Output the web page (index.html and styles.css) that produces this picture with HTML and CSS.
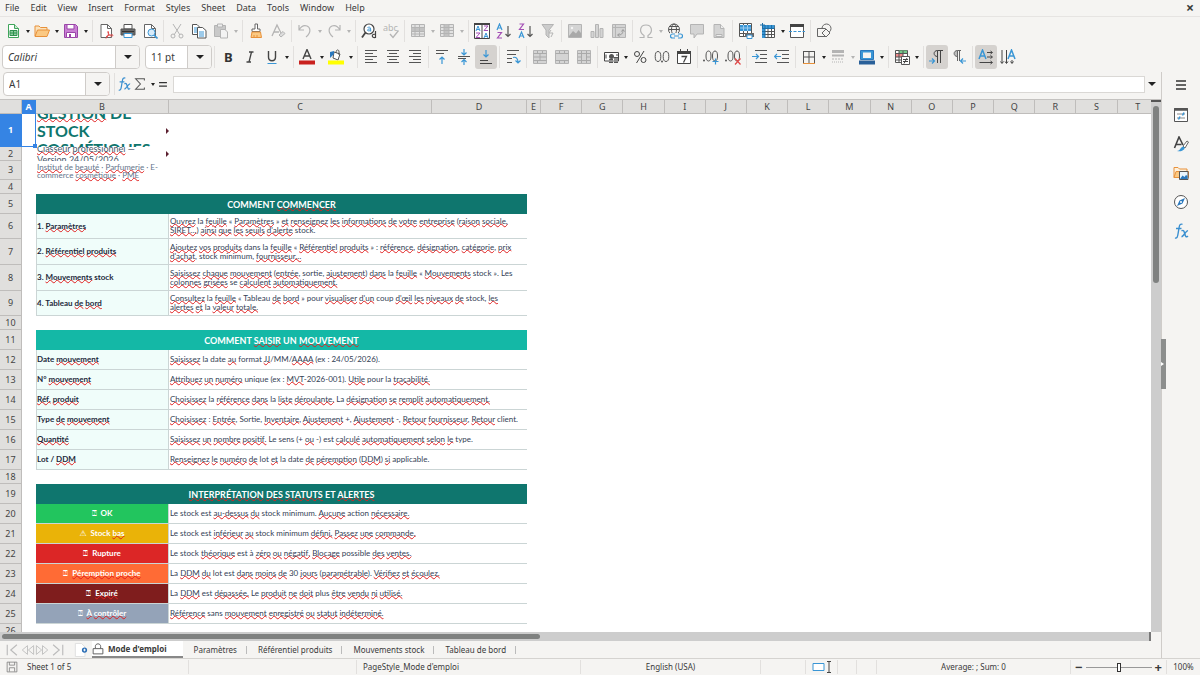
FILE: index.html
```html
<!DOCTYPE html>
<html lang="fr">
<head>
<meta charset="utf-8">
<title>Mode d'emploi</title>
<link rel="stylesheet" href="styles.css">
</head>
<body>
<svg class="defs" aria-hidden="true">
  <symbol id="new" viewBox="0 0 16 16"><path d="M3.500 1.500h6l4 4v9h-10z" fill="#fff" stroke="#3fa55b"/><path d="M9.500 1.500v4h4" fill="#c9ead0" stroke="#3fa55b"/><path d="M5 7.500h7v5H5z" fill="#8fcf9f" stroke="#2f9150"/><path d="M5 10h7M8.500 7.500v5" stroke="#2f9150"/></symbol>
  <symbol id="open" viewBox="0 0 16 16"><path d="M1 13V3h4l1.500 1.500H13V7" fill="#fbe3bd" stroke="#e8913a"/><path d="M1 13.500 3.500 7H15.500L13 13.500z" fill="#fbc983" stroke="#e8913a"/></symbol>
  <symbol id="save" viewBox="0 0 16 16"><path d="M1.500 1.500h11l2 2v11h-13z" fill="#c97fd4" stroke="#9a46a8"/><path d="M4 1.500h7V6H4zM3.500 9.500h9v5h-9z" fill="#fff" stroke="#9a46a8"/><path d="M6 11h2v3H6z" fill="#9a46a8"/></symbol>
  <symbol id="pdf" viewBox="0 0 16 16"><path d="M3 1.500h6.500l4 4v9H3z" fill="#fff" stroke="#666"/><path d="M9.500 1.500v4h4" fill="none" stroke="#666"/><path d="M8 15.500c2-2 3-5 2.500-6.500s-1.500 0 .5 2.500 4 1.500 4 .700-4-.500-7 1.500" fill="none" stroke="#e04848"/></symbol>
  <symbol id="print" viewBox="0 0 16 16"><path d="M4 1.500h8V6H4z" fill="#fff" stroke="#555"/><path d="M1 6h14v6H1z" fill="#686868" stroke="#555"/><path d="M2 8.500h12" stroke="#333"/><path d="M4 10.500h8v4H4z" fill="#fff" stroke="#3a96d5"/></symbol>
  <symbol id="preview" viewBox="0 0 16 16"><path d="M2.500 1.500h7l4 4v9h-11z" fill="#fff" stroke="#666"/><path d="M9.500 1.500v4h4" fill="none" stroke="#666"/><circle cx="9.500" cy="9.500" r="3.500" fill="#d8ecfa" stroke="#3a96d5"/><path d="m12 12 3.500 3.500" stroke="#3a96d5" stroke-width="1.600"/></symbol>
  <symbol id="cut" viewBox="0 0 16 16"><path d="m4 1 7 11M12 1 5 12" fill="none" stroke="#b4b4b4"/><circle cx="4" cy="13" r="2" fill="none" stroke="#b4b4b4"/><circle cx="12" cy="13" r="2" fill="none" stroke="#b4b4b4"/></symbol>
  <symbol id="copy" viewBox="0 0 16 16"><path d="M1.500 1.500H6l3 3v7h-7.500z" fill="#fff" stroke="#555"/><path d="M3 5h4M3 7h4M3 9h4" stroke="#3a96d5"/><path d="M6.500 4.500h5l3.500 3v7.500H6.500z" fill="#fff" stroke="#555"/><path d="M8 9h5M8 11h5M8 13h5" stroke="#3a96d5"/></symbol>
  <symbol id="paste" viewBox="0 0 16 16"><path d="M1.500 2.500h11v11h-11z" fill="#c9c9c9" stroke="#b4b4b4"/><path d="M4.500 1h5v3h-5z" fill="#eee" stroke="#b4b4b4"/><path d="M7.500 6.500H12l2.500 2.500v6h-7z" fill="#f3f3f3" stroke="#b4b4b4"/></symbol>
  <symbol id="brush" viewBox="0 0 16 16"><path d="M7 1h2.500v5H12v2.500H4V6h3z" fill="#fff" stroke="#666"/><path d="M4 9h8.500l1 5.500H3z" fill="#fbc983" stroke="#e8913a"/><path d="M6 12v2.500M9 12v2.500" stroke="#e8913a"/></symbol>
  <symbol id="clear" viewBox="0 0 16 16"><path d="M2 13 7 2l4 8M4 9h5" fill="none" stroke="#b4b4b4" stroke-width="1.300"/><path d="m9 12 4-3.500 2 2-4 3.500z" fill="#ddd" stroke="#b4b4b4"/></symbol>
  <symbol id="undo" viewBox="0 0 16 16"><path d="M2 2v5h5M2 7c2-3.500 5-5 8-4s5 6-1 11" fill="none" stroke="#b4b4b4" stroke-width="1.200"/></symbol>
  <symbol id="redo" viewBox="0 0 16 16"><path d="M14 2v5H9M14 7c-2-3.500-5-5-8-4s-5 6 1 11" fill="none" stroke="#b4b4b4" stroke-width="1.200"/></symbol>
  <symbol id="find" viewBox="0 0 16 16"><circle cx="8" cy="6" r="5" fill="#fff" stroke="#444" stroke-width="1.200"/><path d="m4.500 9.500-3.500 5" stroke="#444" stroke-width="1.800"/><path d="M6.500 4.500c3-1 3.200 0 3.200 4M9.500 6c-4-.5-4 3 0 1.500" fill="none" stroke="#3a96d5"/><path d="M14.500 8v7M14.500 11.500c-4-1.500-4.500 4 0 3" fill="none" stroke="#444" stroke-width="1.200"/></symbol>
  <symbol id="spell" viewBox="0 0 16 16"><text x="0" y="8" font-size="9" fill="#b4b4b4">abc</text><path d="m7 11 3 3.500 5.500-7" fill="none" stroke="#b4b4b4" stroke-width="1.300"/></symbol>
  <symbol id="rowi" viewBox="0 0 16 16"><path d="M1.500 1.500h13v12h-13z" fill="#e2e2e2" stroke="#b4b4b4"/><path d="M1.500 4.500h13v4h-13z" fill="#c2c2c2"/><path d="M1.500 4.500h13M1.500 8.500h13M1.500 11h13M5 1v12M9.500 1v12" stroke="#b4b4b4"/></symbol>
  <symbol id="coli" viewBox="0 0 16 16"><path d="M1.500 1.500h13v12h-13z" fill="#e2e2e2" stroke="#b4b4b4"/><path d="M5 1.500h5v12H5z" fill="#c2c2c2"/><path d="M1.500 4.500h13M1.500 7.500h13M1.500 10.500h13M5 1v12M10 1v12" stroke="#b4b4b4"/></symbol>
  <symbol id="sort" viewBox="0 0 16 16"><path d="M.5.5h15v15H.5z" fill="#fff" stroke="#444"/><path d="M0 1h16" stroke="#444" stroke-width="2"/><path d="M8 1v15" stroke="#444"/><path d="m2 8 2-5 2 5M3 6.500h2M10 15l2-5 2 5M11 13.500h2" fill="none" stroke="#3a96d5"/><path d="M2 10h4l-4 4.500h4M10 3h4l-4 4.500h4" fill="none" stroke="#a44fb5"/></symbol>
  <symbol id="az" viewBox="0 0 16 16"><path d="m1 7 2.500-6L6 7M2 5h3" fill="none" stroke="#3a96d5" stroke-width="1.200"/><path d="M1.500 9.500h4l-4 5.500h4.500" fill="none" stroke="#a44fb5" stroke-width="1.200"/><path d="M12 3v10.500M9.500 11l2.500 2.500 2.500-2.500" fill="none" stroke="#555" stroke-width="1.200"/></symbol>
  <symbol id="za" viewBox="0 0 16 16"><path d="m1 15 2.500-6L6 15M2 13h3" fill="none" stroke="#3a96d5" stroke-width="1.200"/><path d="M1.500 1h4l-4 5.500h4.500" fill="none" stroke="#a44fb5" stroke-width="1.200"/><path d="M12 3v10.500M9.500 11l2.500 2.500 2.500-2.500" fill="none" stroke="#555" stroke-width="1.200"/></symbol>
  <symbol id="filter" viewBox="0 0 16 16"><path d="M2 1.500h11.500L9 7v8l-3-3V7z" fill="#ccc" stroke="#b4b4b4"/><path d="m11 7-2 3h4l-2 4" fill="none" stroke="#b4b4b4"/></symbol>
  <symbol id="image" viewBox="0 0 16 16"><path d="M1.500 1.500h13v13h-13z" fill="#d4d4d4" stroke="#b4b4b4"/><path d="m2 13 4-5 3 2.500L11.500 7 14 10v4H2z" fill="#a9a9a9"/><circle cx="5" cy="5" r="1.200" fill="#f4f4f4"/></symbol>
  <symbol id="chart" viewBox="0 0 16 16"><path d="M2 8.500h3v6H2zM6.500 1.500h3v13h-3zM11 5.500h3v9h-3z" fill="#d4d4d4" stroke="#b4b4b4"/></symbol>
  <symbol id="pivot" viewBox="0 0 16 16"><path d="M1.500 1.500h13v13h-13z" fill="#d4d4d4" stroke="#b4b4b4"/><path d="M4.500 2v12M2 4.500h12" stroke="#b4b4b4"/><path d="M12 7c0 4-2 5-5 5M10.500 8.500 12 6.500l1.500 2M8.500 10.500 6.500 12l2 1.500" fill="none" stroke="#999"/></symbol>
  <symbol id="omega" viewBox="0 0 16 16"><path d="M1.500 14.500H6v-2C.5 9 2 2 8 2s7.500 7 2 10.500v2h4.500" fill="none" stroke="#b4b4b4" stroke-width="1.200"/></symbol>
  <symbol id="link" viewBox="0 0 16 16"><circle cx="7" cy="6.500" r="5.500" fill="none" stroke="#555"/><ellipse cx="7" cy="6.500" rx="2.500" ry="5.500" fill="none" stroke="#555"/><path d="M1.500 6.500h11M2.500 3.500h9" stroke="#555"/><path d="M3 10h12v6H3z" fill="#f5f4f2"/><path d="M8 11H5.500a2 2 0 0 0 0 4H8M11 11h2.500a2 2 0 0 1 0 4H11M7 13h5" fill="none" stroke="#3a96d5" stroke-width="1.200"/></symbol>
  <symbol id="comment" viewBox="0 0 16 16"><path d="M1.500 1.500h13v9.500H8l-3 4v-4H1.500z" fill="#d4d4d4" stroke="#b4b4b4"/></symbol>
  <symbol id="hdr" viewBox="0 0 16 16"><path d="M3 1.500h6.500l3.500 4v9H3z" fill="#d4d4d4" stroke="#b4b4b4"/><path d="M9.500 1.500v4H13M5 11.500h6v2H5z" fill="#eee" stroke="#b4b4b4"/></symbol>
  <symbol id="prange" viewBox="0 0 16 16"><path d="M1.500.5h12v13h-12z" fill="#fff" stroke="#555"/><path d="M5.500 1v12M9.500 1v12M2 10.500h12" stroke="#555"/><path d="M2 2h11v6H2z" fill="#3a96d5"/><path d="M2 5h11M5.500 2v6M9.500 2v6" stroke="#9accf0"/><path d="M7 10h9v4H7z" fill="#686868"/><path d="M9 12h5v3.500H9z" fill="#fff" stroke="#3a96d5"/></symbol>
  <symbol id="freeze" viewBox="0 0 16 16"><path d="M4.500 2.500h10v12h-10z" fill="#fff" stroke="#555"/><path d="M4.500 8.500h10M4.500 11.500h10M8 4v10M11.500 4v10" stroke="#555"/><path d="M2 2h12.500v3.500H2zM2 2.500h3V15H2z" fill="#3a96d5"/><path d="M2 5.500h12M2 8.500h3M2 11.500h3M8 2v3M11.500 2v3M5 2v13" stroke="#1d6ea8"/><path d="M0 2h5M2.500 0v5" stroke="#1d6ea8"/></symbol>
  <symbol id="split" viewBox="0 0 16 16"><path d="M1.500 2v12.500h13V2" fill="#fff" stroke="#555"/><path d="M1 2.500h14" stroke="#444" stroke-width="3"/><path d="M0 8.500h16" stroke="#3a96d5" stroke-dasharray="3 1.500"/></symbol>
  <symbol id="shapes" viewBox="0 0 16 16"><circle cx="10.500" cy="5.500" r="4.500" fill="#f5f4f2" stroke="#666"/><path d="M1.500 5.500h8v8h-8z" fill="#f5f4f2" stroke="#666"/><path d="m10 6 4 4-4 4-4-4z" fill="#f5f4f2" stroke="#666"/></symbol>
  <symbol id="bold" viewBox="0 0 16 16"><text x="4" y="13" font-size="13" font-weight="700" fill="#333">B</text></symbol>
  <symbol id="ital" viewBox="0 0 16 16"><path d="M7 3h4.500M4.500 13H9M9.500 3 7 13" stroke="#444" stroke-width="1.300"/></symbol>
  <symbol id="under" viewBox="0 0 16 16"><path d="M4.500 2v6c0 5 7 5 7 0V2" fill="none" stroke="#444" stroke-width="1.400"/><path d="M3.500 14.500h9" stroke="#3a96d5"/></symbol>
  <symbol id="fcol" viewBox="0 0 16 16"><path d="M4 10 8 .500 12 10M5.500 7h5" fill="none" stroke="#444" stroke-width="1.400"/><path d="M0 11.500h16v4H0z" fill="#c9211e"/></symbol>
  <symbol id="hcol" viewBox="0 0 16 16"><path d="m6 3 6 2-2 6-5-2z" fill="#fff" stroke="#555"/><path d="M8 4c0-4 3-4 3-1v3" fill="none" stroke="#555"/><path d="M2 9V3l4-1v3z" fill="#2a78bd"/><path d="M0 11.500h16v4H0z" fill="#ff0"/></symbol>
  <symbol id="al" viewBox="0 0 16 16"><path d="M2 1.500h12M2 4.500h8M2 7.500h12M2 10.500h8M2 13.500h12" stroke="#555"/></symbol>
  <symbol id="ac" viewBox="0 0 16 16"><path d="M2 1.500h12M4 4.500h8M2 7.500h12M4 10.500h8M2 13.500h12" stroke="#555"/></symbol>
  <symbol id="ar" viewBox="0 0 16 16"><path d="M2 1.500h12M6 4.500h8M2 7.500h12M6 10.500h8M2 13.500h12" stroke="#555"/></symbol>
  <symbol id="vt" viewBox="0 0 16 16"><path d="M2 1.500h12M2 4.500h8" stroke="#555"/><path d="M8 15V8M5.500 10.500 8 8l2.500 2.500" fill="none" stroke="#3a96d5" stroke-width="1.200"/></symbol>
  <symbol id="vm" viewBox="0 0 16 16"><path d="M2 7.500h12M2 9.500h8" stroke="#555"/><path d="M8 0v5.500M5.500 3.500 8 6l2.500-2.500M8 16v-5M5.500 13 8 10.500l2.500 2.500" fill="none" stroke="#3a96d5" stroke-width="1.200"/></symbol>
  <symbol id="vb" viewBox="0 0 16 16"><path d="M2 11.500h8M2 14.500h12" stroke="#444"/><path d="M8 1v7M5.500 5.500 8 8l2.500-2.500" fill="none" stroke="#3a96d5" stroke-width="1.200"/></symbol>
  <symbol id="wrap" viewBox="0 0 16 16"><path d="M2 1.500h12M2 5.500h9M2 9.500h5M2 13.500h5" stroke="#555"/><path d="M8 8.500c3-1 5 1 5 5M10.500 11.500 13 14l2.500-2.500" fill="none" stroke="#3a96d5" stroke-width="1.200"/></symbol>
  <symbol id="m1" viewBox="0 0 16 16"><path d="M1.500 1.500h13v13h-13z" fill="#d4d4d4" stroke="#b4b4b4"/><path d="M1.500 4.500h13M1.500 8h13M1.500 11.500h13M5.500 2v3M10.500 2v3M5.500 11v3M8 5v6" stroke="#aaa"/></symbol>
  <symbol id="m2" viewBox="0 0 16 16"><path d="M1.500 1.500h13v13h-13z" fill="#d4d4d4" stroke="#b4b4b4"/><path d="M1.500 4.500h13M1.500 11.500h13M5.500 2v3M10.500 2v3M5.500 11v3M10.500 11v3" stroke="#aaa"/></symbol>
  <symbol id="m3" viewBox="0 0 16 16"><path d="M1.500 1.500h13v13h-13z" fill="#d4d4d4" stroke="#b4b4b4"/><path d="M1.500 4.500h13M1.500 11.500h13M5.500 2v12M10.500 2v12M2 8h4M10 8h4" stroke="#aaa"/></symbol>
  <symbol id="cur" viewBox="0 0 16 16"><path d="M1.500 3.500h14V12H1.500z" fill="#fff" stroke="#444"/><circle cx="8.500" cy="7.500" r="2.500" fill="#555"/><path d="M3 5.500v4M14 5v2" stroke="#444"/><path d="M6 10h4v4H6zM11 8h4v6h-4z" fill="#555"/><path d="M6 12h9M11 10h4" stroke="#ccc"/></symbol>
  <symbol id="pct" viewBox="0 0 16 16"><circle cx="5" cy="5" r="2.500" fill="none" stroke="#444"/><circle cx="11.500" cy="11" r="2.500" fill="none" stroke="#444"/><path d="M12 2 4.500 14" stroke="#444"/></symbol>
  <symbol id="num" viewBox="0 0 16 16"><ellipse cx="4" cy="7.500" rx="2.800" ry="5" fill="none" stroke="#555"/><ellipse cx="12" cy="7.500" rx="2.800" ry="5" fill="none" stroke="#555"/><circle cx="8" cy="12.500" r="1" fill="#555"/></symbol>
  <symbol id="date" viewBox="0 0 16 16"><path d="M1.500 3h13v11.500h-13z" fill="#fff" stroke="#444"/><path d="M1 3.500h14" stroke="#444" stroke-width="3"/><path d="M4.500 0v3M11.500 0v3" stroke="#444"/><path d="M5.500 7.500h5l-3 6" fill="none" stroke="#444" stroke-width="1.300"/></symbol>
  <symbol id="dadd" viewBox="0 0 16 16"><circle cx="1" cy="11.500" r="1" fill="#555"/><ellipse cx="5.500" cy="7" rx="2.500" ry="5" fill="none" stroke="#555"/><ellipse cx="12" cy="7" rx="2.500" ry="5" fill="none" stroke="#555"/><path d="M9.500 12.500h6M12.500 9.500v6" stroke="#3a96d5" stroke-width="1.200"/></symbol>
  <symbol id="ddel" viewBox="0 0 16 16"><circle cx="1" cy="11.500" r="1" fill="#555"/><ellipse cx="5.500" cy="7" rx="2.500" ry="5" fill="none" stroke="#555"/><ellipse cx="12" cy="7" rx="2.500" ry="5" fill="none" stroke="#555"/><path d="m10 9.500 5.500 6m0-6-5.500 6" stroke="#e04848" stroke-width="1.200"/></symbol>
  <symbol id="ind" viewBox="0 0 16 16"><path d="M3 1.500h12M8 5.500h7M8 9.500h7M3 13.500h12" stroke="#555"/><path d="M0 7.500h6M4 5l2.500 2.500L4 10" fill="none" stroke="#3a96d5" stroke-width="1.200"/></symbol>
  <symbol id="outd" viewBox="0 0 16 16"><path d="M3 1.500h12M8 5.500h7M8 9.500h7M3 13.500h12" stroke="#555"/><path d="M7 7.500H1M3 5 .5 7.500 3 10" fill="none" stroke="#3a96d5" stroke-width="1.200"/></symbol>
  <symbol id="bord" viewBox="0 0 16 16"><path d="M2.500 2v12M13.500 2v12M2 2.500h12M8 2v12M2 8h12" stroke="#555"/><path d="M2 14.500h12" stroke="#e8913a"/></symbol>
  <symbol id="bsty" viewBox="0 0 16 16"><path d="M2 2.500h12" stroke="#b4b4b4" stroke-width="3"/><path d="M2 6.500h12" stroke="#b4b4b4" stroke-width="2"/><path d="M2 10h12" stroke="#b4b4b4" stroke-dasharray="2 1"/><path d="M2 13h12" stroke="#b4b4b4" stroke-dasharray="1 1"/></symbol>
  <symbol id="bcol" viewBox="0 0 16 16"><path d="M1.500 1.500h13v9h-13z" fill="#3a96d5" stroke="#2a78bd"/><path d="M4 3.500h8V9H4z" fill="#f5f4f2"/><path d="M0 11.500h16v4H0z" fill="#2a6099"/></symbol>
  <symbol id="cond" viewBox="0 0 16 16"><path d="M1.500 1.500h12v12h-12z" fill="#fff" stroke="#555"/><path d="M5 1.500h8v3H5z" fill="#74c98a"/><path d="M2 5h7v3H2z" fill="#f08a8a"/><path d="M2 4.500h11M2 8h11M2 11h5M5 2v12M9 2v6" stroke="#555"/><path d="M7.500 7.500h8v8h-8z" fill="#fff" stroke="#555"/><path d="M9 10.500h5M9 12.500h5M13 9l-3 5.500" stroke="#444"/></symbol>
  <symbol id="ltr" viewBox="0 0 16 16"><path d="M8.500 7.500C4 7.500 4 1.500 8.500 1.500H14M8.500 1.500V14M11.500 1.500V14" fill="none" stroke="#444"/><path d="M0 12h5.500M3 9.500 5.500 12 3 14.500" fill="none" stroke="#3a96d5" stroke-width="1.200"/></symbol>
  <symbol id="rtl" viewBox="0 0 16 16"><path d="M6.500 7.500C2 7.500 2 1.500 6.500 1.500z" fill="#bbb"/><path d="M6.500 7.500C2 7.500 2 1.500 6.500 1.500H10M6.500 1.500V12M8.500 1.500V12" fill="none" stroke="#666"/><path d="M15 12H9.500M12 9.500 9.500 12l2.500 2.500" fill="none" stroke="#3a96d5" stroke-width="1.200"/></symbol>
  <symbol id="hor" viewBox="0 0 16 16"><path d="M1 10 4.500 1 8 10M2.500 7h4" fill="none" stroke="#3a96d5" stroke-width="1.500"/><path d="M9 3.500h5M9 8h5M1.500 13.500H14M12.500 2l2 1.500-2 1.500M12.500 6.500l2 1.500-2 1.500M12.500 12l2 1.500-2 1.500" fill="none" stroke="#444"/></symbol>
  <symbol id="ver" viewBox="0 0 16 16"><path d="M8 10 11.500 1 15 10M9.500 7h4" fill="none" stroke="#3a96d5" stroke-width="1.500"/><path d="M2 1v13M6.500 1v13M12 11v3M.5 12.500 2 14.500l1.500-2M5 12.500l1.500 2 1.500-2M10.500 12.500l1.500 2 1.500-2" fill="none" stroke="#444"/></symbol>
  <symbol id="fx" viewBox="0 0 16 16"><path d="M2 15c2 .5 2.500-1 3-4l1.200-7C6.600 1.500 7.500.7 9.500 1.300M3 5.500h5.500" fill="none" stroke="#3a8fd0" stroke-width="1.400"/><path d="M8.500 8c2-1.500 2.500 0 3.200 2.500S13 15 15 13M15 7.800c-2-.5-4 5.500-6.500 6" fill="none" stroke="#3a8fd0" stroke-width="1.400"/></symbol>
  <symbol id="sum" viewBox="0 0 16 16"><path d="M13 4V2H3l5.500 6L3 14h10v-2" fill="none" stroke="#555" stroke-width="1.200"/></symbol>
  <symbol id="eq" viewBox="0 0 16 16"><path d="M3.500 6.500h9M3.500 10.500h9" stroke="#333" stroke-width="1.500"/></symbol>
  <symbol id="menu" viewBox="0 0 16 16"><path d="M3 4h10M3 8h10M3 12h10" stroke="#333" stroke-width="1.500"/></symbol>
  <symbol id="props" viewBox="0 0 16 16"><path d="M1.500 1.500h13v13h-13z" fill="#fff" stroke="#555"/><path d="M1 2.500h14" stroke="#555" stroke-width="2.500"/><path d="M4 7h8M4 11h8" stroke="#888"/><path d="m11 5.500-1.500 3M7 9.500l-1.500 3" stroke="#3a96d5" stroke-width="1.500"/></symbol>
  <symbol id="style" viewBox="0 0 16 16"><path d="M1.500 12 6 1l4 8M3 8.500h5.500" fill="none" stroke="#444" stroke-width="1.600"/><path d="m10 10 4-5 1.500 1-3.500 6z" fill="#fff" stroke="#666"/><path d="M4 15c3 0 3-3 6-4.500 2 .5 2 2 1 3s-4 2.500-7 1.500" fill="#3a96d5"/></symbol>
  <symbol id="gallery" viewBox="0 0 16 16"><path d="M1 12.500V2.500h4L6.500 4H14v2" fill="#fdf0dc" stroke="#e8913a"/><path d="M1 12.500 3 6.500h12.500v6z" fill="#fbc983" stroke="#e8913a"/><path d="M6.500 6.500h8.500v8H6.500z" fill="#e9f5fd" stroke="#555"/><path d="m7 14 2.500-3.500 2 1.500 1.500-2 1.500 1v3z" fill="#2a78bd"/></symbol>
  <symbol id="nav" viewBox="0 0 16 16"><circle cx="8" cy="8" r="6.500" fill="#fff" stroke="#555"/><path d="M12 4 9.500 9.500 4 12l2.500-5.500z" fill="#2a78bd"/><circle cx="8" cy="8" r="1" fill="#fff"/></symbol>
  <symbol id="lock" viewBox="0 0 16 16"><path d="M1.500 7.500h13v7h-13zM4.500 7V4.500c0-4.500 7-4.500 7 0V7" fill="none" stroke="#555" stroke-width="1.200"/></symbol>
  <symbol id="addsheet" viewBox="0 0 16 16"><path d="M1.500.5h7l4 4v11h-11z" fill="#fff" stroke="#ddd"/><circle cx="12" cy="8" r="3" fill="#2a6db5"/><path d="M10.500 8h3M12 6.500v3" stroke="#fff"/></symbol>
  <symbol id="disk" viewBox="0 0 16 16"><path d="M1.500 1.500h13v13h-13zM4.500 1.500v4h7v-4M4.500 14v-5h7v5" fill="none" stroke="#777"/></symbol>
  <symbol id="first" viewBox="0 0 16 16"><path d="M2 2v12M13 2 6 8l7 6" fill="none" stroke="#bbb" stroke-width="1.300"/></symbol>
  <symbol id="prev" viewBox="0 0 16 16"><path d="M8 3 2 8l6 5zM15 3 9 8l6 5z" fill="none" stroke="#bbb"/></symbol>
  <symbol id="next" viewBox="0 0 16 16"><path d="m1 3 6 5-6 5zM8 3l6 5-6 5z" fill="none" stroke="#bbb"/></symbol>
  <symbol id="last" viewBox="0 0 16 16"><path d="M14 2v12M3 2l7 6-7 6" fill="none" stroke="#bbb" stroke-width="1.300"/></symbol>
  <symbol id="selm" viewBox="0 0 20 12"><path d="M1 2.500h11v7H1z" fill="#fff" stroke="#3a96d5"/><path d="M15 .5h4M15 11.500h4M17 .5v11" stroke="#444"/></symbol>
</svg>

<nav class="menubar">
  <button>File</button><button>Edit</button><button>View</button><button>Insert</button><button>Format</button><button>Styles</button><button>Sheet</button><button>Data</button><button>Tools</button><button>Window</button><button>Help</button>
  <button class="close" aria-label="Close">×</button>
</nav>

<div class="toolbars">
  <div class="toolbar">
    <button class="tb" aria-label="New"><svg><use href="#new"/></svg></button><button class="dd" aria-label="New options"></button>
    <button class="tb" aria-label="Open"><svg><use href="#open"/></svg></button><button class="dd" aria-label="Open options"></button>
    <button class="tb" aria-label="Save"><svg><use href="#save"/></svg></button><button class="dd" aria-label="Save options"></button>
    <i class="sep"></i>
    <button class="tb" aria-label="Export as PDF"><svg><use href="#pdf"/></svg></button>
    <button class="tb" aria-label="Print"><svg><use href="#print"/></svg></button>
    <button class="tb" aria-label="Print preview"><svg><use href="#preview"/></svg></button>
    <i class="sep"></i>
    <button class="tb" aria-label="Cut"><svg><use href="#cut"/></svg></button>
    <button class="tb" aria-label="Copy"><svg><use href="#copy"/></svg></button>
    <button class="tb" aria-label="Paste"><svg><use href="#paste"/></svg></button><button class="dd off" aria-label="Paste options"></button>
    <i class="sep"></i>
    <button class="tb" aria-label="Clone formatting"><svg><use href="#brush"/></svg></button>
    <button class="tb" aria-label="Clear formatting"><svg><use href="#clear"/></svg></button>
    <i class="sep"></i>
    <button class="tb" aria-label="Undo"><svg><use href="#undo"/></svg></button><button class="dd off" aria-label="Undo list"></button>
    <button class="tb" aria-label="Redo"><svg><use href="#redo"/></svg></button><button class="dd off" aria-label="Redo list"></button>
    <i class="sep"></i>
    <button class="tb" aria-label="Find and replace"><svg><use href="#find"/></svg></button>
    <button class="tb" aria-label="Spelling"><svg><use href="#spell"/></svg></button>
    <i class="sep"></i>
    <button class="tb" aria-label="Row"><svg><use href="#rowi"/></svg></button><button class="dd off" aria-label="Row options"></button>
    <button class="tb" aria-label="Column"><svg><use href="#coli"/></svg></button><button class="dd off" aria-label="Column options"></button>
    <i class="sep"></i>
    <button class="tb" aria-label="Sort"><svg><use href="#sort"/></svg></button>
    <button class="tb" aria-label="Sort ascending"><svg><use href="#az"/></svg></button>
    <button class="tb" aria-label="Sort descending"><svg><use href="#za"/></svg></button>
    <button class="tb" aria-label="AutoFilter"><svg><use href="#filter"/></svg></button>
    <i class="sep"></i>
    <button class="tb" aria-label="Insert image"><svg><use href="#image"/></svg></button>
    <button class="tb" aria-label="Insert chart"><svg><use href="#chart"/></svg></button>
    <button class="tb" aria-label="Pivot table"><svg><use href="#pivot"/></svg></button>
    <i class="sep"></i>
    <button class="tb" aria-label="Special character"><svg><use href="#omega"/></svg></button><button class="dd off" aria-label="More characters"></button>
    <button class="tb" aria-label="Hyperlink"><svg><use href="#link"/></svg></button>
    <button class="tb" aria-label="Comment"><svg><use href="#comment"/></svg></button>
    <button class="tb" aria-label="Headers and footers"><svg><use href="#hdr"/></svg></button>
    <i class="sep"></i>
    <button class="tb" aria-label="Print area"><svg><use href="#prange"/></svg></button>
    <button class="tb" aria-label="Freeze"><svg><use href="#freeze"/></svg></button><button class="dd" aria-label="Freeze options"></button>
    <button class="tb" aria-label="Split window"><svg><use href="#split"/></svg></button>
    <i class="sep"></i>
    <button class="tb" aria-label="Draw functions"><svg><use href="#shapes"/></svg></button>
  </div>
  <div class="toolbar format">
    <div class="combo font"><input type="text" aria-label="Font name" value="Calibri"><button aria-label="Font list"></button></div>
    <div class="combo size"><input type="text" aria-label="Font size" value="11 pt"><button aria-label="Size list"></button></div>
    <i class="sep"></i>
    <button class="tb" aria-label="Bold"><svg><use href="#bold"/></svg></button>
    <button class="tb" aria-label="Italic"><svg><use href="#ital"/></svg></button>
    <button class="tb" aria-label="Underline"><svg><use href="#under"/></svg></button><button class="dd" aria-label="Underline options"></button>
    <i class="sep"></i>
    <button class="tb" aria-label="Font colour"><svg><use href="#fcol"/></svg></button><button class="dd" aria-label="Font colours"></button>
    <button class="tb" aria-label="Background colour"><svg><use href="#hcol"/></svg></button><button class="dd" aria-label="Background colours"></button>
    <i class="sep"></i>
    <button class="tb" aria-label="Align left"><svg><use href="#al"/></svg></button>
    <button class="tb" aria-label="Align centre"><svg><use href="#ac"/></svg></button>
    <button class="tb" aria-label="Align right"><svg><use href="#ar"/></svg></button>
    <i class="sep"></i>
    <button class="tb" aria-label="Align top"><svg><use href="#vt"/></svg></button>
    <button class="tb" aria-label="Centre vertically"><svg><use href="#vm"/></svg></button>
    <button class="tb on" aria-label="Align bottom" aria-pressed="true"><svg><use href="#vb"/></svg></button>
    <i class="sep"></i>
    <button class="tb" aria-label="Wrap text"><svg><use href="#wrap"/></svg></button>
    <i class="sep"></i>
    <button class="tb" aria-label="Merge and centre"><svg><use href="#m1"/></svg></button>
    <button class="tb" aria-label="Merge cells"><svg><use href="#m2"/></svg></button>
    <button class="tb" aria-label="Unmerge cells"><svg><use href="#m3"/></svg></button>
    <i class="sep"></i>
    <button class="tb" aria-label="Currency"><svg><use href="#cur"/></svg></button><button class="dd" aria-label="Currencies"></button>
    <button class="tb" aria-label="Percent"><svg><use href="#pct"/></svg></button>
    <button class="tb" aria-label="Number"><svg><use href="#num"/></svg></button>
    <button class="tb" aria-label="Date"><svg><use href="#date"/></svg></button>
    <i class="sep"></i>
    <button class="tb" aria-label="Add decimal"><svg><use href="#dadd"/></svg></button>
    <button class="tb" aria-label="Delete decimal"><svg><use href="#ddel"/></svg></button>
    <i class="sep"></i>
    <button class="tb" aria-label="Increase indent"><svg><use href="#ind"/></svg></button>
    <button class="tb" aria-label="Decrease indent"><svg><use href="#outd"/></svg></button>
    <i class="sep"></i>
    <button class="tb" aria-label="Borders"><svg><use href="#bord"/></svg></button><button class="dd" aria-label="Border list"></button>
    <button class="tb" aria-label="Border style"><svg><use href="#bsty"/></svg></button><button class="dd off" aria-label="Border styles"></button>
    <button class="tb" aria-label="Border colour"><svg><use href="#bcol"/></svg></button><button class="dd" aria-label="Border colours"></button>
    <i class="sep"></i>
    <button class="tb" aria-label="Conditional formatting"><svg><use href="#cond"/></svg></button><button class="dd" aria-label="Conditions"></button>
    <i class="sep"></i>
    <button class="tb on" aria-label="Left to right" aria-pressed="true"><svg><use href="#ltr"/></svg></button>
    <button class="tb" aria-label="Right to left"><svg><use href="#rtl"/></svg></button>
    <i class="sep"></i>
    <button class="tb on" aria-label="Horizontal text" aria-pressed="true"><svg><use href="#hor"/></svg></button>
    <button class="tb" aria-label="Vertical text"><svg><use href="#ver"/></svg></button>
  </div>
</div>

<div class="main">
  <div class="work">
    <div class="formulabar">
      <div class="combo name"><input type="text" aria-label="Name box" value="A1"><button aria-label="Named ranges"></button></div>
      <i class="sep"></i>
      <button class="fb" aria-label="Function wizard"><svg><use href="#fx"/></svg></button>
      <button class="fb" aria-label="Sum"><svg><use href="#sum"/></svg></button><button class="dd" aria-label="Select function"></button>
      <button class="fb" aria-label="Formula"><svg><use href="#eq"/></svg></button>
      <input class="formula" type="text" aria-label="Formula input">
      <button class="dd big" aria-label="Expand formula bar"></button>
    </div>

    <div class="view">
      <div class="sheet">
        <table>
          <colgroup><col class="c-row"><col class="c-a"><col class="c-b"><col class="c-c"><col class="c-d"><col class="c-a"><col span="15"></colgroup>
          <thead>
            <tr><th></th><th class="sel">A</th><th>B</th><th>C</th><th>D</th><th>E</th><th>F</th><th>G</th><th>H</th><th>I</th><th>J</th><th>K</th><th>L</th><th>M</th><th>N</th><th>O</th><th>P</th><th>Q</th><th>R</th><th>S</th><th>T</th></tr>
          </thead>
          <tbody>
            <tr class="r-title"><th class="sel">1</th><td class="cursor"></td><td class="more"><div class="clip title"><span><u>GESTION</u> DE<br>STOCK<br><u>COSMÉTIQUES</u></span></div></td><td colspan="18"></td></tr>
            <tr class="r-thin"><th>2</th><td></td><td class="more"><div class="clip sub"><span><u>Classeur</u> <u>professionnel</u> —<br>Version 24/05/2026</span></div></td><td colspan="18"></td></tr>
            <tr class="r-note"><th>3</th><td></td><td class="note"><u>Institut</u> de <u>beauté</u> · <u>Parfumerie</u> · E-<br>commerce <u>cosmétique</u> · <u>PME</u></td><td colspan="18"></td></tr>
            <tr class="r-thin"><th>4</th><td colspan="20"></td></tr>
            <tr><th>5</th><td></td><td class="band" colspan="3">COMMENT <u>COMMENCER</u></td><td colspan="16"></td></tr>
            <tr class="r-mid"><th>6</th><td></td><td class="key">1. <u>Paramètres</u></td><td class="val" colspan="2"><u>Ouvrez</u> la <u>feuille</u> « <u>Paramètres</u> » <u>et</u> <u>renseignez</u> <u>les</u> <u>informations</u> <u>de</u> <u>votre</u> <u>entreprise</u> (<u>raison</u> <u>sociale,</u><br><u>SIRET…</u>) <u>ainsi</u> <u>que</u> <u>les</u> <u>seuils</u> <u>d'alerte</u> stock.</td><td colspan="16"></td></tr>
            <tr class="r-tall"><th>7</th><td></td><td class="key">2. <u>Référentiel</u> <u>produits</u></td><td class="val" colspan="2"><u>Ajoutez</u> <u>vos</u> <u>produits</u> dans la <u>feuille</u> « <u>Référentiel</u> <u>produits</u> » : <u>référence</u>, <u>désignation</u>, <u>catégorie</u>, <u>prix</u><br><u>d'achat</u>, stock minimum, <u>fournisseur…</u></td><td colspan="16"></td></tr>
            <tr class="r-tall"><th>8</th><td></td><td class="key">3. <u>Mouvements</u> stock</td><td class="val" colspan="2"><u>Saisissez</u> <u>chaque</u> <u>mouvement</u> (<u>entrée</u>, sortie, <u>ajustement</u>) <u>dans</u> la <u>feuille</u> « <u>Mouvements</u> stock ». Les<br><u>colonnes</u> <u>grisées</u> se <u>calculent</u> <u>automatiquement.</u></td><td colspan="16"></td></tr>
            <tr class="r-mid"><th>9</th><td></td><td class="key">4. Tableau <u>de</u> <u>bord</u></td><td class="val" colspan="2"><u>Consultez</u> la <u>feuille</u> « Tableau <u>de</u> <u>bord</u> » pour <u>visualiser</u> <u>d'un</u> coup <u>d'œil</u> <u>les</u> <u>niveaux</u> <u>de</u> stock, <u>les</u><br><u>alertes</u> <u>et</u> la <u>valeur</u> <u>totale.</u></td><td colspan="16"></td></tr>
            <tr class="r-gap"><th>10</th><td colspan="20"></td></tr>
            <tr><th>11</th><td></td><td class="band light" colspan="3">COMMENT <u>SAISIR</u> UN <u>MOUVEMENT</u></td><td colspan="16"></td></tr>
            <tr><th>12</th><td></td><td class="key">Date <u>mouvement</u></td><td class="val" colspan="2"><u>Saisissez</u> la date <u>au</u> format <u>JJ</u>/MM/<u>AAAA</u> (ex : 24/05/2026).</td><td colspan="16"></td></tr>
            <tr><th>13</th><td></td><td class="key">N° <u>mouvement</u></td><td class="val" colspan="2"><u>Attribuez</u> <u>un</u> <u>numéro</u> unique (ex : <u>MVT</u>-2026-001). <u>Utile</u> pour la <u>traçabilité.</u></td><td colspan="16"></td></tr>
            <tr><th>14</th><td></td><td class="key"><u>Réf.</u> <u>produit</u></td><td class="val" colspan="2"><u>Choisissez</u> la <u>référence</u> <u>dans</u> la <u>liste</u> <u>déroulante.</u> La <u>désignation</u> <u>se</u> <u>remplit</u> <u>automatiquement.</u></td><td colspan="16"></td></tr>
            <tr><th>15</th><td></td><td class="key">Type <u>de</u> <u>mouvement</u></td><td class="val" colspan="2"><u>Choisissez</u> : <u>Entrée</u>, Sortie, <u>Inventaire</u>, <u>Ajustement</u> +, <u>Ajustement</u> -, <u>Retour</u> <u>fournisseur</u>, <u>Retour</u> client.</td><td colspan="16"></td></tr>
            <tr><th>16</th><td></td><td class="key"><u>Quantité</u></td><td class="val" colspan="2"><u>Saisissez</u> <u>un</u> <u>nombre</u> <u>positif.</u> Le sens (+ <u>ou</u> -) est <u>calculé</u> <u>automatiquement</u> <u>selon</u> <u>le</u> type.</td><td colspan="16"></td></tr>
            <tr><th>17</th><td></td><td class="key">Lot / <u>DDM</u></td><td class="val" colspan="2"><u>Renseignez</u> <u>le</u> <u>numéro</u> <u>de</u> lot <u>et</u> la date <u>de</u> <u>péremption</u> (<u>DDM</u>) <u>si</u> applicable.</td><td colspan="16"></td></tr>
            <tr class="r-gap"><th>18</th><td colspan="20"></td></tr>
            <tr><th>19</th><td></td><td class="band" colspan="3"><u>INTERPRÉTATION</u> <u>DES</u> <u>STATUTS</u> ET <u>ALERTES</u></td><td colspan="16"></td></tr>
            <tr><th>20</th><td></td><td class="tag ok"><span class="sym">⍰</span> OK</td><td class="val" colspan="2">Le stock est <u>au-dessus</u> <u>du</u> stock minimum. <u>Aucune</u> action <u>nécessaire.</u></td><td colspan="16"></td></tr>
            <tr><th>21</th><td></td><td class="tag low"><span class="sym">⚠</span> Stock <u>bas</u></td><td class="val" colspan="2">Le stock est <u>inférieur</u> <u>au</u> stock minimum <u>défini.</u> <u>Passez</u> <u>une</u> <u>commande.</u></td><td colspan="16"></td></tr>
            <tr><th>22</th><td></td><td class="tag out"><span class="sym">⍰</span> Rupture</td><td class="val" colspan="2">Le stock <u>théorique</u> est à <u>zéro</u> <u>ou</u> <u>négatif.</u> <u>Blocage</u> possible <u>des</u> <u>ventes.</u></td><td colspan="16"></td></tr>
            <tr><th>23</th><td></td><td class="tag soon"><span class="sym">⍰</span> <u>Péremption</u> <u>proche</u></td><td class="val" colspan="2">La <u>DDM</u> <u>du</u> lot est <u>dans</u> <u>moins</u> <u>de</u> 30 <u>jours</u> (<u>paramétrable</u>). <u>Vérifiez</u> <u>et</u> <u>écoulez.</u></td><td colspan="16"></td></tr>
            <tr><th>24</th><td></td><td class="tag expired"><span class="sym">⍰</span> <u>Expiré</u></td><td class="val" colspan="2">La <u>DDM</u> est <u>dépassée.</u> Le <u>produit</u> <u>ne</u> <u>doit</u> plus <u>être</u> <u>vendu</u> <u>ni</u> <u>utilisé.</u></td><td colspan="16"></td></tr>
            <tr><th>25</th><td></td><td class="tag check"><span class="sym">⍰</span> <u>À</u> <u>contrôler</u></td><td class="val" colspan="2"><u>Référence</u> sans <u>mouvement</u> <u>enregistré</u> <u>ou</u> <u>statut</u> <u>indéterminé.</u></td><td colspan="16"></td></tr>
            <tr class="r-gap"><th>26</th><td colspan="20"></td></tr>
          </tbody>
        </table>
      </div>
      <div class="vscroll"><i></i></div>
      <div class="hscroll"><i></i></div>
    </div>

    <div class="tabs">
      <div class="tabnav"><button aria-label="First sheet"><svg><use href="#first"/></svg></button><button aria-label="Previous sheet"><svg><use href="#prev"/></svg></button><button aria-label="Next sheet"><svg><use href="#next"/></svg></button><button aria-label="Last sheet"><svg><use href="#last"/></svg></button></div>
      <button class="add" aria-label="Add sheet"><svg><use href="#addsheet"/></svg></button>
      <button class="tab active"><svg><use href="#lock"/></svg>Mode d'emploi</button>
      <button class="tab">Paramètres</button>
      <button class="tab">Référentiel produits</button>
      <button class="tab">Mouvements stock</button>
      <button class="tab">Tableau de bord</button>
    </div>
  </div>

  <aside class="sidebar">
    <button aria-label="Sidebar settings"><svg><use href="#menu"/></svg></button>
    <button aria-label="Properties"><svg><use href="#props"/></svg></button>
    <button aria-label="Styles"><svg><use href="#style"/></svg></button>
    <button aria-label="Gallery"><svg><use href="#gallery"/></svg></button>
    <button aria-label="Navigator"><svg><use href="#nav"/></svg></button>
    <button aria-label="Functions"><svg><use href="#fx"/></svg></button>
    <button class="handle" aria-label="Show sidebar"></button>
  </aside>
</div>

<footer class="status">
  <div><svg class="disk"><use href="#disk"/></svg>Sheet 1 of 5</div>
  <div></div>
  <div class="page">PageStyle_Mode d'emploi</div>
  <div class="mid">English (USA)</div>
  <div></div>
  <div class="mid"><svg class="selm"><use href="#selm"/></svg></div>
  <div></div>
  <div></div>
  <div class="mid">Average: ; Sum: 0</div>
  <div class="zoom"><button aria-label="Zoom out">−</button><input type="range" aria-label="Zoom" min="20" max="180" value="100"><button aria-label="Zoom in">+</button></div>
  <div class="mid">100%</div>
</footer>
</body>
</html>
```
FILE: styles.css
```css
* { box-sizing: border-box; }
body {
  margin: 0;
  height: 100vh;
  display: flex;
  flex-direction: column;
  overflow: hidden;
  background: #f5f4f2;
  color: #3a3a3a;
  font: 9px/12px "Noto Sans", sans-serif;
}
button, input { font: inherit; color: inherit; margin: 0; padding: 0; border: 0; background: none; }
svg { display: block; width: 16px; height: 16px; }
.defs { position: absolute; width: 0; height: 0; }

/* menu bar */
.menubar { display: flex; align-items: center; height: 17px; border-bottom: 1px solid #e6e4e2; }
.menubar button { padding: 0 6px 0 5px; }
.menubar .close { margin-left: auto; font-size: 14px; font-weight: 700; }

/* toolbars */
.toolbars { padding: 0 2px 3px; }
.toolbar { display: flex; align-items: center; height: 28px; }
.toolbar.format { height: 24px; }
.tb { width: 22px; height: 24px; display: grid; place-items: center; border-radius: 3px; flex: none; }
.tb.on { background: #d5d2cf; }
.dd { width: 7px; height: 16px; display: grid; place-items: center; flex: none; }
.dd::after, .combo button::after { content: ""; border: 2px solid transparent; border-top: 3px solid #222; border-bottom: 0; }
.dd.off::after { border-top-color: #b4b4b4; }
.sep { width: 5px; height: 22px; flex: none; background: linear-gradient(#e2e0de, #e2e0de) center / 1px 100% no-repeat; }
.dd + .sep { width: 6px; }
.combo { display: flex; height: 24px; background: #fff; border: 1px solid #cfccc9; border-radius: 4px; overflow: hidden; flex: none; }
.combo input { flex: 1; min-width: 0; padding-left: 5px; font-size: 10px; }
.combo button { width: 24px; display: grid; place-items: center; background: #f5f4f2; border-left: 1px solid #cfccc9; }
.combo button::after, .dd.big::after { border-width: 4px 4px 0; }
.combo.font { width: 138px; margin-right: 5px; }
.combo.font input { font-style: italic; }
.combo.size { width: 67px; }

/* body of the window */
.main { flex: 1; min-height: 0; display: flex; }
.work { flex: 1; min-width: 0; display: flex; flex-direction: column; border-right: 1px solid #cfccc9; }
.formulabar { display: flex; align-items: center; height: 28px; padding: 0 3px 3px; border-bottom: 1px solid #c4c2c0; }
.combo.name { width: 107px; margin-right: 2px; }
.fb { width: 16px; height: 16px; flex: none; }
.fb svg { width: 14px; height: 14px; }
.formula { flex: 1; min-width: 0; height: 17px; margin: 0 1px; background: #fff; border: 1px solid #dad8d5; }
.dd.big { width: 12px; }

.view { flex: 1; min-height: 0; display: grid; grid-template: minmax(0, 1fr) 9px / minmax(0, 1fr) 10px; }
.sheet { overflow: hidden; background: #fff; }
.vscroll { background: #cdcdcd; border-top: 2px solid #555; padding: 4px 2px; }
.vscroll i { display: block; height: 34%; background: #7f8180; border-radius: 3px; }
.hscroll { background: #cdcdcd; border-right: 2px solid #777; padding: 2px; }
.hscroll i { display: block; width: 47%; height: 5px; background: #7f8180; border-radius: 3px; }

/* spreadsheet */
table { table-layout: fixed; width: calc(100% + 8px); border-collapse: separate; border-spacing: 0; font-family: Lato, sans-serif; font-size: 8px; line-height: 9px; }
.c-row { width: 22px; }
.c-a { width: 14px; }
.c-b { width: 133px; }
.c-c { width: 263px; }
.c-d { width: 95px; }
th { padding: 0; font: 9px/12px "Noto Sans", sans-serif; color: #444; background: #e0dfdd; border: solid #bfbdbb; border-width: 0 1px 1px 0; }
th.sel { background: #3584e4; color: #fff; font-weight: 700; border-color: #3584e4; }
thead tr { height: 14px; }
td { padding: 0; color: #334155; }
tbody tr { height: 20px; }
tbody .r-title { height: 33px; }
tbody .r-thin { height: 14px; }
tbody .r-note { height: 19px; }
tbody .r-mid { height: 25px; }
tbody .r-tall { height: 26px; }
tbody .r-gap { height: 14px; }
.cursor { border: solid #3584e4; border-width: 0 1px 1px 0; position: relative; }
.cursor::after { content: ""; position: absolute; right: -2px; bottom: -2px; width: 4px; height: 4px; background: #3584e4; }
.more { position: relative; }
.more::after { content: ""; position: absolute; right: 0; top: calc(50% - 3px); border: 3px solid transparent; border-left-color: #5c2030; border-right: 0; }
.clip { display: flex; align-items: center; overflow: hidden; padding-left: 1px; white-space: nowrap; }
.title { height: 33px; color: #0f766e; font-size: 16px; font-weight: 700; line-height: 18px; }
.sub { height: 14px; color: #475569; font-size: 9px; line-height: 11px; }
.note { padding-left: 1px; color: #64748b; line-height: 8px; white-space: nowrap; }
.band { background: #0f766e; color: #fff; font-size: 9px; font-weight: 700; text-align: center; }
.band.light { background: #14b8a6; }
.key { background: #f0fdfa; color: #1e293b; font-weight: 700; border: solid #cbd5d5; border-width: 0 1px 1px; }
.val { padding-left: 1px; white-space: nowrap; border-bottom: 1px solid #cbd5d5; }
.tag { color: #fff; font-weight: 700; text-align: center; border: solid #cbd5d5; border-width: 0 1px 1px 0; }
.ok { background: #22c55e; }
.low { background: #eab308; }
.out { background: #dc2626; }
.soon { background: #ff6b35; }
.expired { background: #7f1d1d; }
.check { background: #94a3b8; }
.sym { font-family: "DejaVu Sans", sans-serif; font-weight: 400; margin-right: 2px; }
u { text-decoration: underline wavy #e02020 1px; text-decoration-skip-ink: none; text-underline-offset: -1px; }

/* sheet tabs */
.tabs { display: flex; align-items: center; height: 17px; font-size: 8px; }
.tabnav { display: flex; width: 74px; padding-left: 5px; }
.tabnav svg { width: 15px; height: 14px; }
.add { width: 18px; }
.add svg { width: 14px; height: 14px; }
.tab { position: relative; padding: 0 10px 0 11px; }
.tab:not(.active)::after { content: ""; position: absolute; right: 0; top: 2px; height: 8px; border-right: 1px solid #bbb; }
.tab.active { display: flex; align-items: center; gap: 4px; align-self: stretch; padding: 0 16px 0 0; background: #fff; border-bottom: 2px solid #888; font-weight: 700; }
.tab svg { width: 12px; height: 12px; }

/* sidebar */
.sidebar { position: relative; width: 38px; display: flex; flex-direction: column; align-items: center; gap: 13px; padding-top: 5px; }
.sidebar > button:first-child { margin-bottom: 1px; }
.sidebar .handle { position: absolute; left: -1px; top: 267px; width: 5px; height: 50px; background: #8c8e8d; }
.handle::after { content: ""; display: block; border: 2px solid transparent; border-left: 3px solid #fff; border-right: 0; }

/* status bar */
.status { display: grid; grid-template-columns: 189fr 168fr 224fr 180fr 45fr 32fr 19fr 20fr 194fr 96fr 33fr; align-items: center; height: 17px; border-top: 1px solid #d5d3d0; font-size: 8px; }
.status > div { display: flex; align-items: center; min-width: 0; height: 14px; border-right: 1px solid #e2e0de; white-space: nowrap; }
.status > div:last-child { border-right: 0; }
.status .mid { justify-content: center; }
.status .page { padding-left: 6px; }
.disk { width: 12px; height: 12px; margin: 0 9px 0 6px; }
.selm { width: 20px; height: 12px; }
.status .zoom { padding: 0 4px; gap: 3px; }
.zoom button { font-size: 13px; font-weight: 700; }
.zoom input { flex: 1; min-width: 0; height: 12px; appearance: none; background: linear-gradient(#999, #999) center / 100% 1px no-repeat; }
.zoom input::-webkit-slider-thumb { appearance: none; width: 4px; height: 9px; background: #fff; border: 1px solid #333; }
```
